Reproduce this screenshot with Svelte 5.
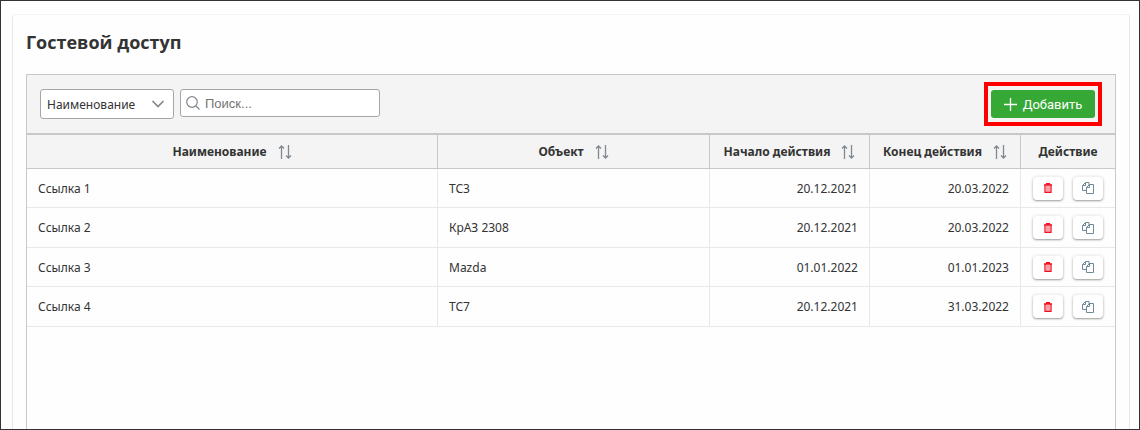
<script>
  let field = $state('name')
  let query = $state('')
  let sortKey = $state('')
  let sortDir = $state(1)

  const columns = [
    {field: 'name', caption: 'Наименование', align: 'left', sortable: true},
    {field: 'object', caption: 'Объект', align: 'left', sortable: true},
    {field: 'start', caption: 'Начало действия', align: 'right', sortable: true},
    {field: 'end', caption: 'Конец действия', align: 'right', sortable: true},
    {field: 'action', caption: 'Действие', align: 'center', sortable: false}
  ]

  let links = $state([
    {name: 'Ссылка 1', object: 'ТС3', start: '20.12.2021', end: '20.03.2022'},
    {name: 'Ссылка 2', object: 'КрАЗ 2308', start: '20.12.2021', end: '20.03.2022'},
    {name: 'Ссылка 3', object: 'Mazda', start: '01.01.2022', end: '01.01.2023'},
    {name: 'Ссылка 4', object: 'ТС7', start: '20.12.2021', end: '31.03.2022'}
  ])

  // dd.mm.yyyy -> yyyymmdd
  function sortValue(link, key) {
    return key === 'start' || key === 'end' ? link[key].split('.').reverse().join('') : link[key]
  }

  let rows = $derived.by(() => {
    const found = links.filter(l => l[field].toLowerCase().includes(query.toLowerCase()))
    if (!sortKey) return found
    return found.sort((a, b) => sortValue(a, sortKey).localeCompare(sortValue(b, sortKey)) * sortDir)
  })

  function sort(key) {
    sortDir = sortKey === key ? -sortDir : 1
    sortKey = key
  }

  function remove(link) {
    links = links.filter(l => l !== link)
  }

  function copy(link) {
    navigator.clipboard?.writeText(link.name)
  }
</script>

<div class="page">
  <main class="card">
    <h1>Гостевой доступ</h1>

    <div class="panel">
      <div class="toolbar">
        <div class="select">
          <select bind:value={field} aria-label="Поле поиска">
            <option value="name">Наименование</option>
            <option value="object">Объект</option>
          </select>
          <svg class="chevron" width="14" height="8" viewBox="0 0 14 8" aria-hidden="true">
            <path d="M1.5 1l5.5 5.5L12.500 1" />
          </svg>
        </div>

        <label class="search">
          <svg width="14" height="14" viewBox="0 0 14 14" aria-hidden="true">
            <circle cx="6" cy="6" r="5.300" />
            <path d="M10 10l3.500 3.500" />
          </svg>
          <input type="text" placeholder="Поиск..." aria-label="Поиск" bind:value={query}>
        </label>

        <div class="highlight">
          <button type="button" class="btn-add">
            <svg width="13" height="13" viewBox="0 0 13 13" aria-hidden="true">
              <path d="M6.500 0v13M0 6.500h13" />
            </svg>
            Добавить
          </button>
        </div>
      </div>

      <table>
        <colgroup>
          <col>
          <col class="col-object">
          <col class="col-start">
          <col class="col-end">
          <col class="col-action">
        </colgroup>
        <thead>
          <tr>
            {#each columns as col}
            <th>
              {#if col.sortable}
              <button type="button" class="btn-sort" onclick={() => sort(col.field)}>
                {col.caption}
                <svg width="14" height="14" viewBox="0 0 14 14" aria-hidden="true">
                  <path d="M3.500 14V1M1 3.500L3.500 1L6 3.500M10.500 0v13M8 10.500l2.500 2.500l2.500 -2.500" />
                </svg>
              </button>
              {:else}
              {col.caption}
              {/if}
            </th>
            {/each}
          </tr>
        </thead>
        <tbody>
          {#each rows as link}
          <tr>
            {#each columns as col}
            <td class="align-{col.align}">
              {#if col.field === 'action'}
              <div class="actions">
                <button type="button" class="btn-icon" aria-label="Удалить" onclick={() => remove(link)}>
                  <svg class="trash" width="8" height="10" viewBox="0 0 8 10" aria-hidden="true">
                    <path d="M0 2h8M2.500 2V0.500h3V2M1 2v7.500h6V2" />
                    <path class="thin" d="M3 3v6M5 3v6" />
                  </svg>
                </button>
                <button type="button" class="btn-icon" aria-label="Копировать" onclick={() => copy(link)}>
                  <svg class="copy" width="12" height="12" viewBox="0 0 12 12" aria-hidden="true">
                    <path d="M4.500 8.500h-4v-5l3 -3h3.500v3M0.500 3.500h3v-3M7.500 2.500h4v9h-7V5.500l3 -3v3h-3" />
                  </svg>
                </button>
              </div>
              {:else}
              {link[col.field]}
              {/if}
            </td>
            {/each}
          </tr>
          {/each}
        </tbody>
      </table>
    </div>
  </main>
</div>

<style>
:global(body) {
  background: #fefefe;
}

.page {
  box-sizing: border-box;
  min-height: 100vh;
  display: flex;
  padding: 13px 9px 0 11px;
  border: 1px solid #333333;
  color: #333333;
  font-family: "Noto Sans", "Open Sans", sans-serif;
  font-size: 12px;
}

button, select, input {
  font: inherit;
  color: inherit;
}

button {
  cursor: pointer;
}

svg {
  flex: none;
  fill: none;
  stroke: #808890;
}

.card {
  flex: 1;
  min-width: 0;
  display: flex;
  flex-direction: column;
  padding: 0 13px;
  border: 1px solid #e8e8e8;
  border-top-color: #f2f2f2;
  border-bottom: 0;
  border-radius: 4px 4px 0 0;
}

h1 {
  margin: 14px 0 18px;
  font-family: "Open Sans", sans-serif;
  font-size: 18px;
  font-weight: 700;
  line-height: 27px;
}

.panel {
  flex: 1;
  border: 1px solid #c8c8c8;
  border-bottom: 0;
}

.toolbar {
  display: flex;
  align-items: flex-start;
  gap: 6px;
  padding: 7px 13px;
  background: #f4f4f4;
  border-bottom: 2px solid #c8c8c8;
}

.select {
  display: grid;
  align-items: center;
  margin-top: 7px;
}

.select > * {
  grid-area: 1 / 1;
}

select {
  box-sizing: border-box;
  width: 134px;
  height: 30px;
  padding: 0 6px;
  border: 1px solid #a6a6a6;
  border-radius: 3px;
  background: #ffffff;
  appearance: none;
}

.chevron {
  justify-self: end;
  margin-right: 9px;
  stroke-width: 1.7;
  pointer-events: none;
}

.search {
  box-sizing: border-box;
  display: flex;
  align-items: center;
  gap: 5px;
  width: 200px;
  height: 28px;
  margin-top: 7px;
  padding: 0 5px;
  border: 1px solid #a6a6a6;
  border-radius: 3px;
  background: #ffffff;
}

.search svg {
  stroke-width: 1.2;
}

.search input {
  flex: 1;
  min-width: 0;
  padding: 0;
  border: 0;
  outline: 0;
  background: transparent;
  font-family: "Liberation Sans", Arial, sans-serif;
  font-size: 13px;
}

.search input::placeholder {
  color: #757575;
}

.highlight {
  margin-left: auto;
  padding: 4px 3px;
  border: 4px solid #ff0000;
}

.btn-add {
  display: flex;
  align-items: center;
  justify-content: center;
  gap: 6px;
  width: 104px;
  height: 28px;
  padding: 0;
  border: 0;
  border-radius: 3px;
  background: #35a835;
  color: #ffffff;
  font-family: Roboto, sans-serif;
  font-size: 13px;
}

.btn-add svg {
  stroke: #ffffff;
  stroke-width: 1.3;
}

table {
  width: 100%;
  table-layout: fixed;
  border-collapse: separate;
  border-spacing: 0;
}

.col-object { width: 25% }
.col-start { width: 160px }
.col-end { width: 151px }
.col-action { width: 94px }

th, td {
  box-sizing: border-box;
  border: 0 solid #e8e8e8;
  border-width: 0 1px 1px 0;
}

th {
  height: 34px;
  padding: 0;
  background: #f4f4f4;
  border-color: #c8c8c8;
  font-weight: 700;
}

th:last-child, td:last-child {
  border-right: 0;
}

td {
  height: 39px;
  padding: 0 11px;
}

tbody > tr:nth-child(even) > td {
  height: 40px;
}

.align-left {text-align: left}
.align-right {text-align: right}
.align-center {text-align: center}

.btn-sort {
  display: flex;
  align-items: center;
  justify-content: center;
  gap: 11px;
  width: 100%;
  padding: 0;
  border: 0;
  background: transparent;
}

.btn-sort svg {
  stroke-width: 1.3;
}

.actions {
  display: flex;
  justify-content: center;
  gap: 10px;
}

.btn-icon {
  display: flex;
  align-items: center;
  justify-content: center;
  width: 30px;
  height: 23px;
  padding: 0;
  border: 0;
  border-radius: 4px;
  background: #ffffff;
  box-shadow: 0 1px 2px rgba(0, 0, 0, 0.35), 0 0 2px 2px rgba(0, 0, 0, 0.04);
}

.trash {
  stroke: #ee1122;
  stroke-width: 1.3;
}

.trash .thin {
  stroke-width: 0.8;
}

.copy {
  stroke: #6f8894;
}
</style>
